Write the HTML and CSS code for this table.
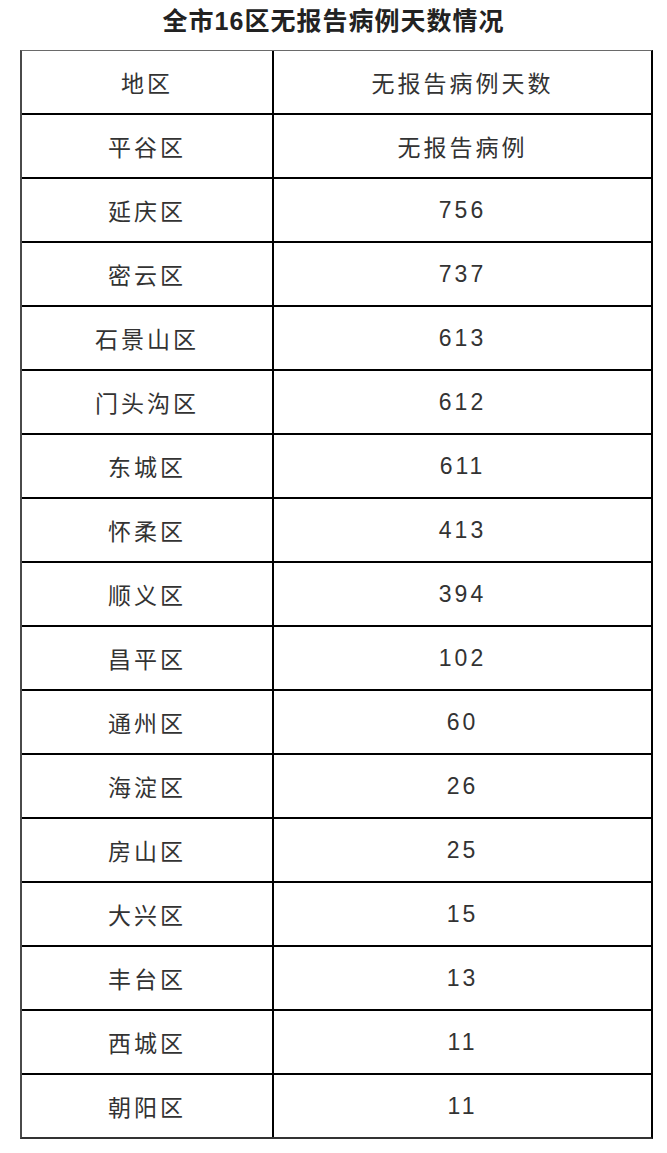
FILE: index.html
```html
<!DOCTYPE html>
<html lang="zh">
<head>
<meta charset="utf-8">
<title>全市16区无报告病例天数情况</title>
<link rel="stylesheet" href="styles.css">
</head>
<body>
<h1 class="title">全市16区无报告病例天数情况</h1>
<div class="table">
  <div class="cell name">地区</div><div class="cell val">无报告病例天数</div>
  <div class="cell name">平谷区</div><div class="cell val">无报告病例</div>
  <div class="cell name">延庆区</div><div class="cell val">756</div>
  <div class="cell name">密云区</div><div class="cell val">737</div>
  <div class="cell name">石景山区</div><div class="cell val">613</div>
  <div class="cell name">门头沟区</div><div class="cell val">612</div>
  <div class="cell name">东城区</div><div class="cell val">611</div>
  <div class="cell name">怀柔区</div><div class="cell val">413</div>
  <div class="cell name">顺义区</div><div class="cell val">394</div>
  <div class="cell name">昌平区</div><div class="cell val">102</div>
  <div class="cell name">通州区</div><div class="cell val">60</div>
  <div class="cell name">海淀区</div><div class="cell val">26</div>
  <div class="cell name">房山区</div><div class="cell val">25</div>
  <div class="cell name">大兴区</div><div class="cell val">15</div>
  <div class="cell name">丰台区</div><div class="cell val">13</div>
  <div class="cell name">西城区</div><div class="cell val">11</div>
  <div class="cell name last">朝阳区</div><div class="cell val last">11</div>
</div>
</body>
</html>
```

FILE: styles.css
```css
html, body {
  margin: 0;
  padding: 0;
  background: #ffffff;
}
body {
  font-family: "Liberation Sans", "Noto Sans CJK SC", sans-serif;
  color: #333333;
}
.title {
  margin: 0;
  height: 50px;
  line-height: 42px;
  text-align: center;
  font-size: 25px;
  font-weight: bold;
  letter-spacing: 1px;
  color: #222222;
}
.table {
  box-sizing: border-box;
  width: 633px;
  margin-left: 20px;
  display: grid;
  grid-template-columns: 252px 1fr;
  border-top: 1px solid #6a6a6a;
  border-left: 2px solid #4a4a4a;
  border-right: 2px solid #000000;
  border-bottom: 2px solid #333333;
}
.cell {
  box-sizing: border-box;
  height: 64px;
  display: flex;
  align-items: center;
  justify-content: center;
  font-size: 23px;
  letter-spacing: 3px;
  border-bottom: 2px solid #000000;
  color: #333333;
}
.cell.name {
  border-right: 2px solid #000000;
}
.cell.last {
  border-bottom: none;
  height: 62px;
}
```
